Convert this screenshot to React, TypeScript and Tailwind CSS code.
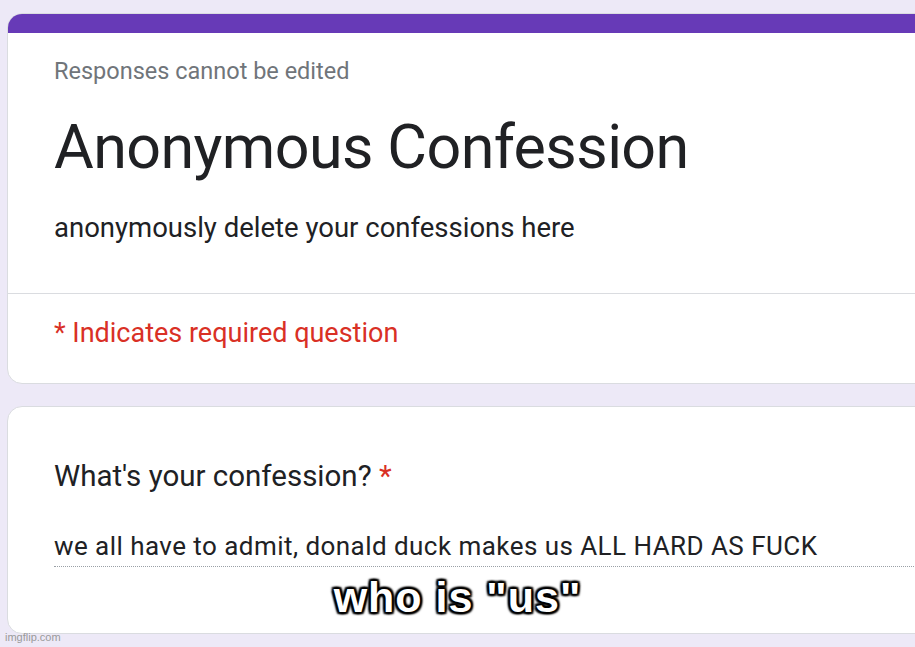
export default function App() {
  return (
    <div className="relative h-[647px] w-[915px] overflow-hidden bg-[#ede9f7] pl-[7px] pt-[13px] font-['Roboto',sans-serif]">
      {/* header card */}
      <div className="w-[940px] overflow-hidden rounded-[15px] border border-[#dadce0] bg-white">
        <div className="h-[19px] bg-[#673ab7]" />
        <div className="pl-[46px] pt-[25px] pb-[49px]">
          <div className="text-[23.5px] leading-[26px] text-[#70757a]">Responses cannot be edited</div>
          <h1 className="mt-[26px] text-[61px] leading-[74px] tracking-[-0.6px] text-[#202124]">
            Anonymous Confession
          </h1>
          <p className="mt-[28px] text-[27.5px] leading-[32px] text-[#202124]">
            anonymously delete your confessions here
          </p>
        </div>
        <div className="border-t border-[#dadce0] pl-[46px] pt-[24px] pb-[35px]">
          <div className="text-[27px] leading-[30px] text-[#d93025]">* Indicates required question</div>
        </div>
      </div>

      {/* question card */}
      <div className="mt-[22px] h-[228px] w-[940px] rounded-[15px] border border-[#dadce0] bg-white pl-[46px] pt-[53px]">
        <div className="text-[29.5px] leading-[32px] text-[#202124]">
          What's your confession? <span className="text-[#d93025]">*</span>
        </div>
        <div className="mt-[39px] border-b border-dotted border-[#9aa0a6] pb-[5px] text-[26px] leading-[30px] tracking-[0.45px] text-[#202124]">
          we all have to admit, donald duck makes us ALL HARD AS FUCK
        </div>
      </div>

      {/* meme caption */}
      <div className="absolute left-0 right-0 top-[572px] text-center font-['Liberation_Sans',Arial,sans-serif] text-[43px] font-bold leading-[50px] tracking-[1px] text-white [text-shadow:2px_0_2px_#000,-2px_0_2px_#000,0_2px_2px_#000,0_-2px_2px_#000,2px_2px_2px_#000,-2px_-2px_2px_#000,2px_-2px_2px_#000,-2px_2px_2px_#000]">
        who is "us"
      </div>

      <div className="absolute bottom-[2px] left-[5px] font-['Liberation_Sans',Arial,sans-serif] text-[11px] text-[#9a9a9a]">
        imgflip.com
      </div>
    </div>
  );
}
